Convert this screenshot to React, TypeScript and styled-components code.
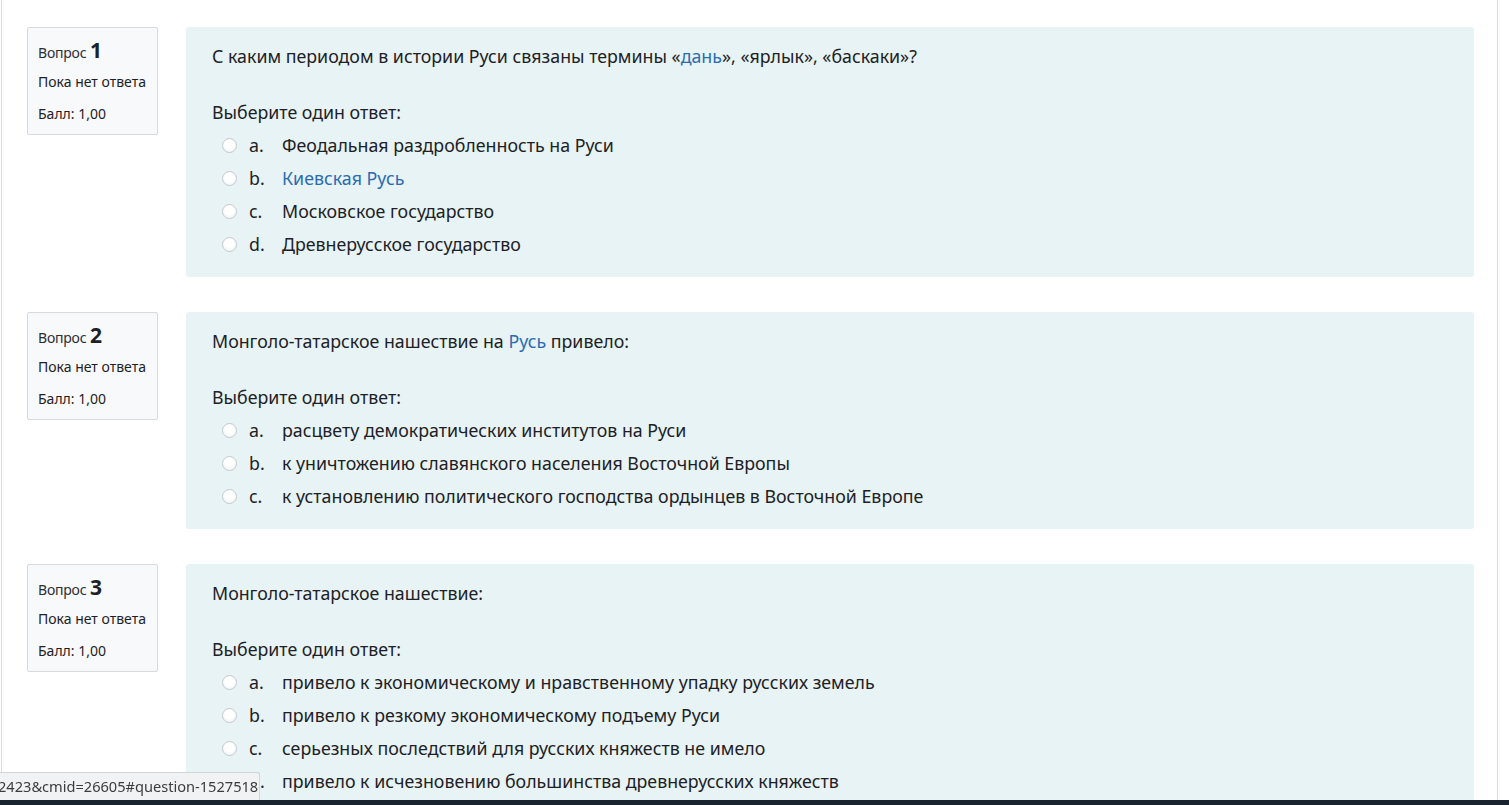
import React from 'react'
import styled, { createGlobalStyle } from 'styled-components'

type Option = { letter: string; text: React.ReactNode }
type Question = { no: number; text: React.ReactNode; options: Option[] }

/* Styles */

const GlobalStyle = createGlobalStyle`
  html, body {
    margin: 0;
    padding: 0;
    background: #fff;
    overflow: hidden;
  }
  body {
    font-family: "Segoe UI", "Noto Sans", "Open Sans", sans-serif;
    color: #1d2125;
  }
`

const Page = styled.div`
  margin-left: 1px;
  width: 1497px;
  min-height: 900px;
  border-left: 1px solid #dcdcdc;
  border-right: 1px solid #dcdcdc;
  padding: 27px 0 0 25px;
  box-sizing: border-box;
`

const QuestionBlock = styled.div`
  display: flex;
  align-items: flex-start;
  gap: 28px;
  margin-bottom: 35px;
`

const Info = styled.div`
  width: 131px;
  height: 108px;
  box-sizing: border-box;
  flex-shrink: 0;
  background: #f8f9fa;
  border: 1px solid #d7dadd;
  border-radius: 2px;
  padding: 8px 10px;
  font-size: 14px;
  color: #1d2125;
`

const InfoNo = styled.div`
  font-size: 14px;
  line-height: 28px;
  height: 28px;
  margin-bottom: 7px;
  letter-spacing: -0.2px;
  color: #2a2e33;

  b {
    font-size: 21px;
    font-weight: 700;
    letter-spacing: 0;
    color: #1d2125;
  }
`

const InfoLine = styled.div`
  line-height: 22px;
  margin-bottom: 10px;
`

const Content = styled.div`
  width: 1288px;
  box-sizing: border-box;
  background: #e7f3f5;
  border-radius: 3px;
  padding: 17px 26px 16px;
  font-size: 17.8px;
  line-height: 25px;
`

const QText = styled.div`
  margin-bottom: 31px;
`

const Prompt = styled.div`
  margin-bottom: 4px;
`

const OptionRow = styled.div`
  display: flex;
  align-items: center;
  height: 33px;
  padding-left: 10px;
`

const Radio = styled.span`
  width: 15px;
  height: 15px;
  box-sizing: border-box;
  border-radius: 50%;
  border: 1px solid #c6cacf;
  background: radial-gradient(circle at 50% 40%, #ffffff 40%, #eceef0 100%);
  margin-right: 12px;
  flex-shrink: 0;
`

const Letter = styled.span`
  width: 33px;
  flex-shrink: 0;
`

const Link = styled.span`
  color: #2b6cb0;
`

const StatusBubble = styled.div`
  position: fixed;
  left: 0;
  bottom: 5px;
  width: 260px;
  height: 28px;
  box-sizing: border-box;
  background: #f1f2f3;
  border: 1px solid #d2d4d6;
  border-left: none;
  border-bottom: none;
  border-top-right-radius: 3px;
  color: #3c3c3c;
  font-size: 14.6px;
  line-height: 27px;
  white-space: nowrap;
  overflow: hidden;
  text-indent: -2px;
`

const Taskbar = styled.div`
  position: fixed;
  left: 0;
  right: 0;
  bottom: 0;
  height: 5px;
  background: #18232f;
`

/* Data */

const questions: Question[] = [
  {
    no: 1,
    text: (
      <>
        С каким периодом в истории Руси связаны термины «<Link>дань</Link>», «ярлык», «баскаки»?
      </>
    ),
    options: [
      { letter: 'a.', text: 'Феодальная раздробленность на Руси' },
      { letter: 'b.', text: <Link>Киевская Русь</Link> },
      { letter: 'c.', text: 'Московское государство' },
      { letter: 'd.', text: 'Древнерусское государство' },
    ],
  },
  {
    no: 2,
    text: (
      <>
        Монголо-татарское нашествие на <Link>Русь</Link> привело:
      </>
    ),
    options: [
      { letter: 'a.', text: 'расцвету демократических институтов на Руси' },
      { letter: 'b.', text: 'к уничтожению славянского населения Восточной Европы' },
      { letter: 'c.', text: 'к установлению политического господства ордынцев в Восточной Европе' },
    ],
  },
  {
    no: 3,
    text: 'Монголо-татарское нашествие:',
    options: [
      { letter: 'a.', text: 'привело к экономическому и нравственному упадку русских земель' },
      { letter: 'b.', text: 'привело к резкому экономическому подъему Руси' },
      { letter: 'c.', text: 'серьезных последствий для русских княжеств не имело' },
      { letter: 'd.', text: 'привело к исчезновению большинства древнерусских княжеств' },
    ],
  },
]

export default function App() {
  return (
    <>
      <GlobalStyle />
      <Page>
        {questions.map((q) => (
          <QuestionBlock key={q.no}>
            <Info>
              <InfoNo>
                Вопрос <b>{q.no}</b>
              </InfoNo>
              <InfoLine>Пока нет ответа</InfoLine>
              <InfoLine>Балл: 1,00</InfoLine>
            </Info>
            <Content>
              <QText>{q.text}</QText>
              <Prompt>Выберите один ответ:</Prompt>
              {q.options.map((o) => (
                <OptionRow key={o.letter}>
                  <Radio />
                  <Letter>{o.letter}</Letter>
                  <span>{o.text}</span>
                </OptionRow>
              ))}
            </Content>
          </QuestionBlock>
        ))}
      </Page>
      <StatusBubble>2423&amp;cmid=26605#question-1527518-</StatusBubble>
      <Taskbar />
    </>
  )
}
